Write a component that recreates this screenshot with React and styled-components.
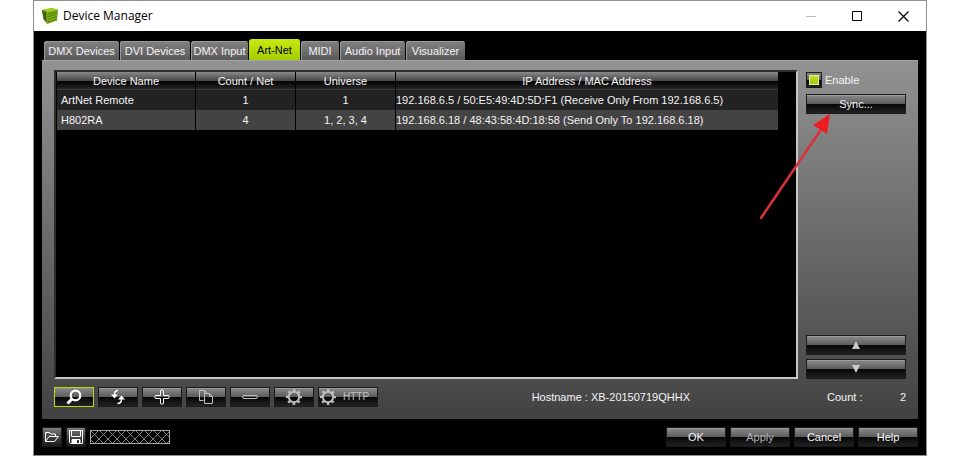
import React, { useState } from 'react'
import styled, { createGlobalStyle, css } from 'styled-components'

const lime = '#b4dc08'
const edge = '#1c1b1c'
const gloss = 'linear-gradient(#8b8a8b 0, #5c5b5c 50%, #050505 50%, #242324 100%)'

const GlobalStyle = createGlobalStyle`
  body {
    margin: 0;
    background: #fff;
    color: #f4f4f4;
    font: 11px/14px "Liberation Sans", Arial, sans-serif;
  }

  button {
    font: inherit;
    color: inherit;
    padding: 0;
  }
`

const Window = styled.div`
  display: flex;
  flex-direction: column;
  box-sizing: border-box;
  min-height: 100vh;
  margin: 0 33px;
  border: 1px solid #8f8f8f;
  background: #000;
`

const TitleBar = styled.header`
  display: flex;
  align-items: center;
  height: 30px;
  padding-left: 8px;
  background: #fff;
  color: #000;
`

const Title = styled.h1`
  flex: 1;
  margin: 0 0 0 5px;
  font: 400 12px/16px "Open Sans", "Noto Sans", sans-serif;
`

const WindowButton = styled.button`
  display: flex;
  align-items: center;
  justify-content: center;
  width: 46px;
  height: 30px;
  border: 0;
  background: none;
`

const Body = styled.main`
  flex: 1;
  display: flex;
  flex-direction: column;
  padding: 8px 8px 0;
`

const Tabs = styled.div`
  display: flex;
  align-items: flex-end;
  height: 21px;
  padding-left: 2px;
`

const Tab = styled.button`
  box-sizing: border-box;
  width: ${props => props.$width}px;
  height: 19px;
  border: 0;
  border-right: 1px solid #000;
  border-radius: 3px 3px 0 0;
  background: linear-gradient(#838283, #5a595a);
  box-shadow: inset 1px 1px 0 #99989a;

  ${props => props.$active && css`
    height: 21px;
    color: #000;
    background: linear-gradient(#c8ea10, #a3cc00);
    box-shadow: none;
  `}
`

const Panel = styled.section`
  flex: 1;
  display: grid;
  grid-template-columns: 1fr 100px;
  grid-template-rows: 1fr 20px;
  gap: 8px;
  padding: 9px 12px 12px;
  border-top: 1px solid #a5a4a5;
  background: linear-gradient(#939293, #434243);
`

const ListBox = styled.div`
  padding-right: 18px;
  border: 2px solid;
  border-color: #2e2d2e #c9c8c9 #c9c8c9 #2e2d2e;
  background: #000;
`

const Table = styled.table`
  width: 100%;
  table-layout: fixed;
  border-collapse: separate;
  border-spacing: 0;
`

const HeadCell = styled.th`
  box-sizing: border-box;
  width: ${props => props.$width};
  height: 18px;
  padding: 0;
  border-left: 1px solid #000;
  border-bottom: 1px solid #3a393a;
  background: linear-gradient(#8a898a 0, #4b4a4b 50%, #000 50%, #262526 100%);
  font-weight: 400;
`

const Row = styled.tr`
  background: ${props => props.$odd ? '#444344' : '#232223'};
`

const Cell = styled.td`
  height: 20px;
  padding: 0 0 0 ${props => props.$indent || 0}px;
  border-left: 1px solid #000;
  text-align: ${props => props.$align || 'left'};
  white-space: nowrap;
`

const Sidebar = styled.aside`
  position: relative;
  display: flex;
  flex-direction: column;
  padding-top: 2px;
`

const CheckLabel = styled.label`
  display: flex;
  align-items: center;
  gap: 3px;
  height: 16px;
  margin-bottom: 6px;
`

const CheckBox = styled.input`
  appearance: none;
  box-sizing: border-box;
  width: 16px;
  height: 16px;
  margin: 0;
  border: 1px solid ${edge};
  background: ${gloss};

  &:checked::before {
    content: '';
    display: block;
    width: 8px;
    height: 8px;
    margin: 2px;
    border: 1px solid #e2f58a;
    background: linear-gradient(#bfe32a, #a2c80c);
  }
`

const Button = styled.button`
  display: flex;
  align-items: center;
  justify-content: center;
  box-sizing: border-box;
  width: 100%;
  height: 20px;
  border: 1px solid ${edge};
  background: ${gloss};
  box-shadow: inset 0 1px 0 #9b9a9b;
`

const ToolButton = styled(Button)`
  width: 40px;
  color: ${props => props.$dim ? '#c0bfc0' : '#fff'};

  ${props => props.$active && css`
    border-color: ${lime};
    box-shadow: none;
  `}
`

const HttpButton = styled(ToolButton)`
  justify-content: flex-start;
  gap: 7px;
  width: 60px;
  padding-left: 1px;
  font-size: 10px;
`

const Arrows = styled.div`
  display: flex;
  flex-direction: column;
  gap: 4px;
  margin-top: auto;
`

const Pointer = styled.svg`
  position: absolute;
  top: 43px;
  left: -48px;
  pointer-events: none;
`

const Toolbar = styled.div`
  display: flex;
  align-items: center;
  gap: 4px;
`

const Hostname = styled.div`
  margin: 0 108px 0 auto;
`

const Count = styled.div`
  display: flex;
  align-items: center;
  justify-content: space-between;
  padding-left: 21px;
`

const Footer = styled.footer`
  display: flex;
  align-items: center;
  gap: 4px;
  padding: 8px 0;
`

const FileButton = styled.button`
  display: flex;
  align-items: center;
  justify-content: center;
  width: 20px;
  height: 20px;
  border: 1px solid ${edge};
  background: linear-gradient(#7d7c7d, #3a393a 60%, #1c1b1c);
`

const Hatch = styled.svg`
  width: 80px;
  height: 14px;
  margin-right: auto;
`

const FooterButton = styled(Button)`
  width: 60px;
  color: ${props => props.$dim ? '#b3b2b3' : '#f4f4f4'};
`

const Logo = () => (
  <svg width="16" height="16" viewBox="0 0 16 16">
    <path d="M0 2 9 0l7 1.500-1 11L5.500 16 1.500 11z" fill="#7fae14"/>
    <path d="M0 2 9 0l7 1.500L5 4z" fill="#a4d024"/>
    <path d="M0 2 5 4l.5 12-4-5z" fill="#41640c"/>
    <path d="M5 6.500 15.500 4M5 9l10.500-3M5 11.500 15 8.500M5.500 14 15 11" stroke="#557f0c" fill="none"/>
    <path d="M5 4v12" stroke="#b9dc4a" strokeWidth=".6"/>
  </svg>
)

const SearchIcon = () => (
  <svg width="18" height="16" viewBox="0 0 18 16" fill="none" stroke="currentColor">
    <circle cx="10.500" cy="6.500" r="4.800" strokeWidth="2.200"/>
    <path d="M7 10 2.500 14.500" strokeWidth="3"/>
  </svg>
)

const RefreshIcon = () => (
  <svg width="16" height="16" viewBox="0 0 16 16">
    <path d="M8 1.500C5.500 1.500 4.500 3 4.500 6M7.500 14.500C10 14.500 11.500 13 11.500 10" fill="none" stroke="currentColor" strokeWidth="1.500"/>
    <path d="M1 5.500h7L4.500 9.500zM8 10.500h7L11.500 6.500z" fill="currentColor"/>
  </svg>
)

const PlusIcon = () => (
  <svg width="16" height="16" viewBox="0 0 16 16" fill="none" stroke="currentColor">
    <path d="M6.500 1.500q1.500-1.500 3 0v5h5q1.500 1.500 0 3h-5v5q-1.500 1.500-3 0v-5h-5q-1.500-1.500 0-3h5z"/>
  </svg>
)

const CopyIcon = () => (
  <svg width="16" height="16" viewBox="0 0 16 16" fill="none" stroke="currentColor">
    <path d="M5.500 11.500h-4v-10h5l2.500 2.500M6.500 4.500h5l3 3v7h-8zM11.500 4.500v3h3M6.500 1.500v3"/>
  </svg>
)

const MinusIcon = () => (
  <svg width="16" height="16" viewBox="0 0 16 16" fill="none" stroke="currentColor">
    <rect x=".5" y="6.500" width="15" height="3" rx="1.500"/>
  </svg>
)

const GearIcon = () => (
  <svg width="16" height="16" viewBox="0 0 16 16" fill="none" stroke="currentColor">
    <circle cx="8" cy="8" r="5.200" strokeWidth="2"/>
    <circle cx="8" cy="8" r="7" strokeWidth="2" strokeDasharray="2.500 2.998" strokeDashoffset="1.250"/>
  </svg>
)

const FolderIcon = () => (
  <svg width="16" height="14" viewBox="0 0 16 14" fill="none" stroke="#fff">
    <path d="M1.500 11.500v-9h4l1 1.500h5v2.500M1.500 11.500 5 6.500h9.500l-4 5z"/>
  </svg>
)

const SaveIcon = () => (
  <svg width="16" height="16" viewBox="0 0 16 16" fill="none" stroke="#fff">
    <path d="M1.500 1.500h13v13h-12l-1-1z"/>
    <path d="M3.500 1.500v6h9v-6M4 10.500h8v4H4z"/>
    <path d="M4 10h8v4h-1v-3H9v3H4z" fill="#fff" stroke="none"/>
  </svg>
)

const Triangle = ({ down }) => (
  <svg width="8" height="8" viewBox="0 0 8 8" fill="#c9c8c9">
    <path d={down ? 'M0 0h8L4 8z' : 'M0 8h8L4 0z'}/>
  </svg>
)

const tabs = [
  { name: 'DMX Devices', width: 76 },
  { name: 'DVI Devices', width: 71 },
  { name: 'DMX Input', width: 58 },
  { name: 'Art-Net', width: 52 },
  { name: 'MIDI', width: 39 },
  { name: 'Audio Input', width: 66 },
  { name: 'Visualizer', width: 60 }
]

const devices = [
  {
    name: 'ArtNet Remote',
    count: 1,
    universe: '1',
    address: '192.168.6.5 / 50:E5:49:4D:5D:F1 (Receive Only From 192.168.6.5)'
  },
  {
    name: 'H802RA',
    count: 4,
    universe: '1, 2, 3, 4',
    address: '192.168.6.18 / 48:43:58:4D:18:58 (Send Only To 192.168.6.18)'
  }
]

const DeviceTable = () => (
  <Table>
    <thead>
      <tr>
        <HeadCell $width="139px">Device Name</HeadCell>
        <HeadCell $width="100px">Count / Net</HeadCell>
        <HeadCell $width="100px">Universe</HeadCell>
        <HeadCell>IP Address / MAC Address</HeadCell>
      </tr>
    </thead>
    <tbody>
      {devices.map((device, i) => (
        <Row key={device.name} $odd={i % 2 === 1}>
          <Cell $indent={4}>{device.name}</Cell>
          <Cell $align="center">{device.count}</Cell>
          <Cell $align="center">{device.universe}</Cell>
          <Cell>{device.address}</Cell>
        </Row>
      ))}
    </tbody>
  </Table>
)

const App = () => {
  const [active, setActive] = useState('Art-Net')
  const [enabled, setEnabled] = useState(true)

  return (
    <Window>
      <GlobalStyle/>
      <TitleBar>
        <Logo/>
        <Title>Device Manager</Title>
        <WindowButton aria-label="Minimize">
          <svg width="11" height="11"><path d="M0 5.500h10" stroke="#bbb"/></svg>
        </WindowButton>
        <WindowButton aria-label="Maximize">
          <svg width="11" height="11"><path d="M.5.5h9v9h-9z" fill="none" stroke="#000"/></svg>
        </WindowButton>
        <WindowButton aria-label="Close">
          <svg width="11" height="11"><path d="m.5.5 10 10m0-10-10 10" stroke="#000" strokeWidth="1.200"/></svg>
        </WindowButton>
      </TitleBar>
      <Body>
        <Tabs role="tablist">
          {tabs.map(tab => (
            <Tab
              key={tab.name}
              role="tab"
              aria-selected={tab.name === active}
              $active={tab.name === active}
              $width={tab.width}
              onClick={() => setActive(tab.name)}
            >
              {tab.name}
            </Tab>
          ))}
        </Tabs>
        <Panel>
          <ListBox>
            <DeviceTable/>
          </ListBox>
          <Sidebar>
            <CheckLabel>
              <CheckBox type="checkbox" checked={enabled} onChange={e => setEnabled(e.target.checked)}/>
              Enable
            </CheckLabel>
            <Button>Sync...</Button>
            <Arrows>
              <Button aria-label="Move up"><Triangle/></Button>
              <Button aria-label="Move down"><Triangle down/></Button>
            </Arrows>
            <Pointer width="78" height="110" viewBox="0 0 78 110">
              <path d="M3 105 64 15" stroke="#d9303a" strokeWidth="2.500" strokeLinecap="round"/>
              <path d="M72 1 55 12l14 9z" fill="#ed1c24"/>
            </Pointer>
          </Sidebar>
          <Toolbar>
            <ToolButton $active aria-label="Search"><SearchIcon/></ToolButton>
            <ToolButton aria-label="Refresh"><RefreshIcon/></ToolButton>
            <ToolButton aria-label="Add"><PlusIcon/></ToolButton>
            <ToolButton $dim aria-label="Copy"><CopyIcon/></ToolButton>
            <ToolButton $dim aria-label="Remove"><MinusIcon/></ToolButton>
            <ToolButton $dim aria-label="Settings"><GearIcon/></ToolButton>
            <HttpButton $dim><GearIcon/>HTTP</HttpButton>
            <Hostname>Hostname : XB-20150719QHHX</Hostname>
          </Toolbar>
          <Count>
            <span>Count :</span>
            <span>2</span>
          </Count>
        </Panel>
        <Footer>
          <FileButton aria-label="Open"><FolderIcon/></FileButton>
          <FileButton aria-label="Save"><SaveIcon/></FileButton>
          <Hatch>
            <defs>
              <pattern id="hatch" width="9" height="9" patternUnits="userSpaceOnUse">
                <path d="m0 0 9 9M9 0 0 9" stroke="#a09fa0" strokeWidth=".8"/>
              </pattern>
            </defs>
            <rect x=".5" y=".5" width="79" height="13" fill="url(#hatch)" stroke="#a8a7a8"/>
          </Hatch>
          <FooterButton>OK</FooterButton>
          <FooterButton $dim>Apply</FooterButton>
          <FooterButton>Cancel</FooterButton>
          <FooterButton>Help</FooterButton>
        </Footer>
      </Body>
    </Window>
  )
}

export default App
